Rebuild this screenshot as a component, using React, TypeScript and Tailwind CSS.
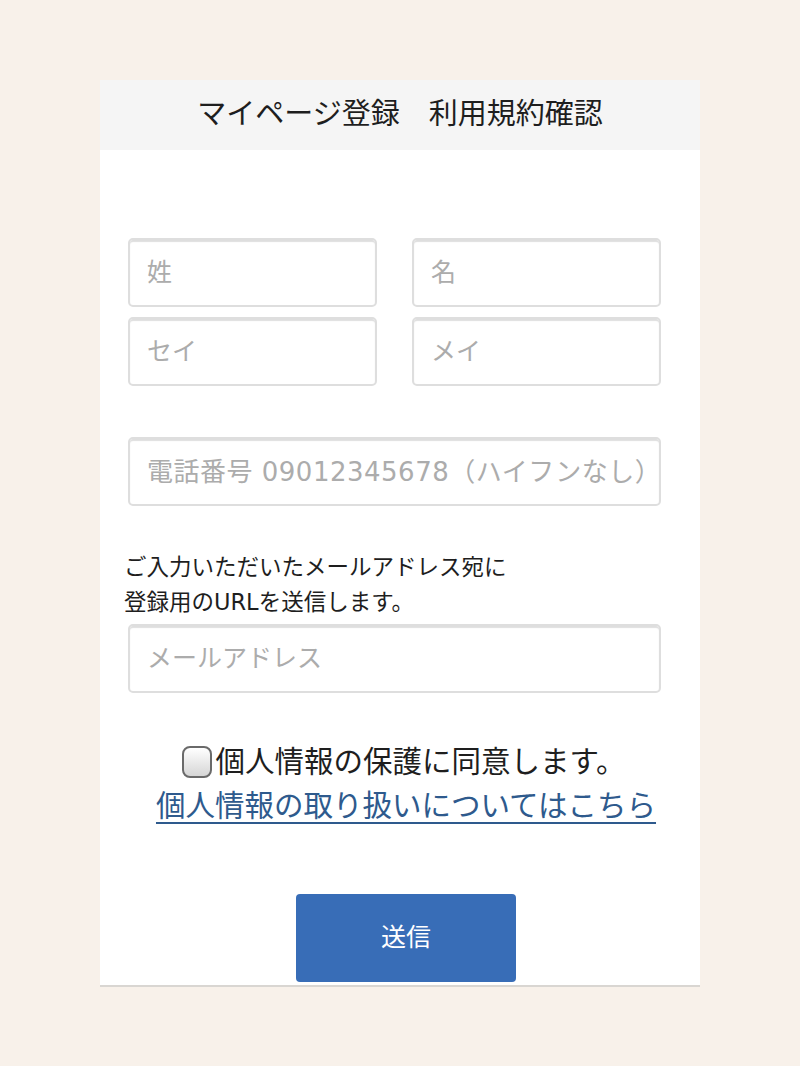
const font = { fontFamily: '"Liberation Sans", "Noto Sans CJK JP", sans-serif' };
const wideDigits = { fontFamily: '"DejaVu Sans", "Noto Sans CJK JP", sans-serif' };

function Field({ placeholder, className = '', wide = false }: { placeholder: string; className?: string; wide?: boolean }) {
  return (
    <input
      type="text"
      placeholder={placeholder}
      style={wide ? wideDigits : font}
      className={`block h-[69px] w-full rounded-[5px] border-2 border-[#dedede] bg-white pl-[17px] text-[#333] placeholder:text-[#acacac] shadow-[inset_0_2px_1px_rgba(0,0,0,0.13)] outline-none ${className}`}
    />
  );
}

export default function App() {
  return (
    <div className="min-h-screen bg-[#f8f1ea] pt-[80px]" style={font}>
      <div className="mx-auto w-[600px] bg-white border-b-2 border-[#d9d6d2]">
        <header className="flex h-[70px] items-center justify-center bg-[#f5f5f5] text-[29px] text-[#1e1e1e]">
          マイページ登録　利用規約確認
        </header>

        <div className="pl-[28px] pr-[39px] pt-[88px]">
          <div className="grid grid-cols-2 gap-x-[35px] gap-y-[10px]">
            <Field placeholder="姓" className="text-[25px]" />
            <Field placeholder="名" className="text-[25px]" />
            <Field placeholder="セイ" className="text-[25px]" />
            <Field placeholder="メイ" className="text-[25px]" />
          </div>

          <Field
            placeholder="電話番号 09012345678（ハイフンなし）"
            className="mt-[51px] text-[26px] tracking-[0.5px]"
            wide
          />

          <p className="-ml-[4px] mt-[45px] text-[22.5px] leading-[34px] text-[#1e1e1e]">
            ご入力いただいたメールアドレス宛に
            <br />
            登録用の<span style={wideDigits}>URL</span>を送信します。
          </p>

          <Field placeholder="メールアドレス" className="mt-[4px] text-[25px]" />
        </div>

        <div className="mt-[47px] flex flex-col items-center">
          <label className="ml-[8px] flex items-center text-[29.5px] leading-[44px] text-[#1e1e1e]">
            <span className="mr-[3px] inline-block h-[32px] w-[30px] rounded-[8px] border-2 border-[#6a6a6a] bg-gradient-to-b from-white to-[#d6d6d6]" />
            個人情報の保護に同意します。
          </label>
          <a href="#" className="ml-[12px] text-[29.5px] leading-[44px] text-[#2e5a8d] underline decoration-[2px] underline-offset-[6px]">
            個人情報の取り扱いについてはこちら
          </a>
        </div>

        <button
          type="button"
          style={font}
          className="mb-[3px] ml-[196px] mt-[66px] flex h-[88px] w-[220px] items-center justify-center rounded-[4px] bg-[#386db7] text-[25px] text-white"
        >
          送信
        </button>
      </div>
    </div>
  );
}
